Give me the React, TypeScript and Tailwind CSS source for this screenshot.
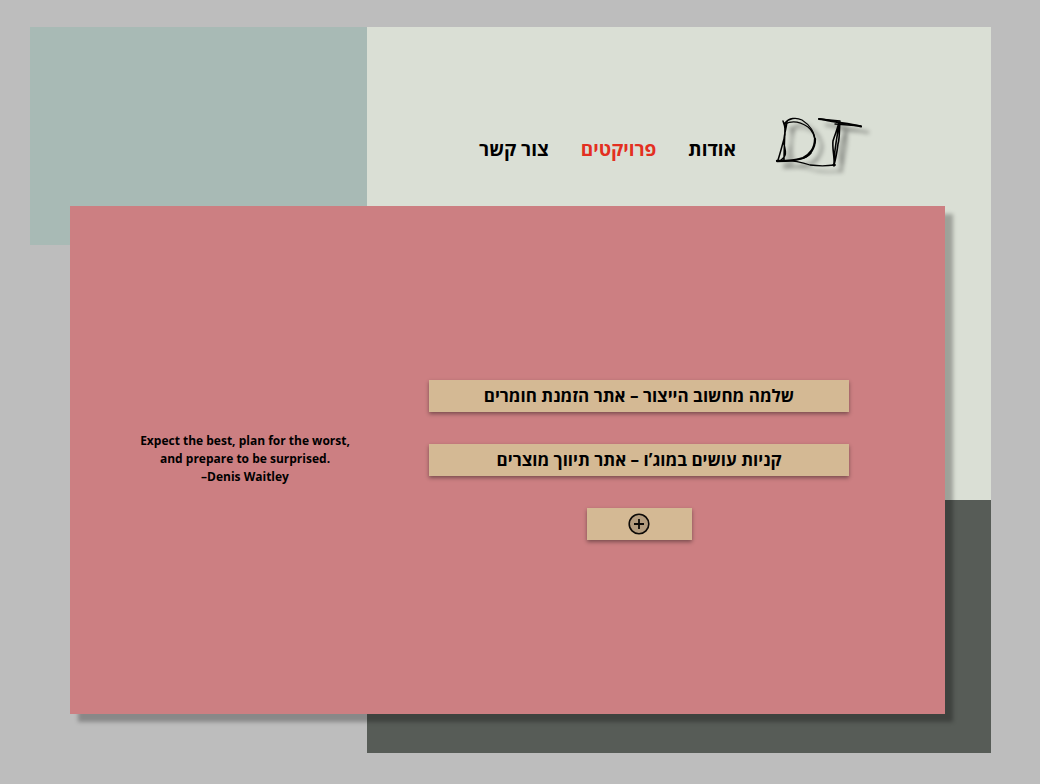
const links = [
  { label: "אודות", href: "#about", active: false },
  { label: "פרויקטים", href: "#projects", active: true },
  { label: "צור קשר", href: "#contact", active: false },
];

const projects = [
  "שלמה מחשוב הייצור – אתר הזמנת חומרים",
  "קניות עושים במוג’ו – אתר תיווך מוצרים",
];

function Logo() {
  return (
    <svg
      viewBox="0 0 120 80"
      className="h-20 w-[120px] drop-shadow-[7px_6px_2px_rgba(0,0,0,0.4)]"
      fill="none"
      stroke="#000"
      strokeLinecap="round"
      strokeLinejoin="round"
      role="img"
      aria-label="DT"
    >
      <path
        d="M23 15C25 20 26 27 24 33C22 40 20 48 18 54M27 16C26 25 23 31 24 38C25 44 28 49 21 54M25 17C25 30 24 42 24 54"
        strokeWidth="1.5"
      />
      <path d="M25 17C29 12 36 11 42 14C50 19 55 27 55 35" strokeWidth="1.3" />
      <path d="M25 18C33 14 42 17 48 21C53 25 55 31 55 37" strokeWidth="1.3" />
      <path d="M55 33C55 42 50 49 43 52C35 55 25 55 17 55" strokeWidth="2.3" />
      <path d="M51 47C46 53 37 54 25 55" strokeWidth="1.4" />
      <path d="M17 55C28 54 41 56 50 59C58 60 67 60 74 59" strokeWidth="1.3" />
      <path d="M59 13C67 14 75 16 82 17C89 18 95 19 101 20.5" strokeWidth="2.2" />
      <path d="M59 13L80 15M75 18L101 20" strokeWidth="1.4" />
      <path
        d="M79 16C78 22 75 28 73 35C72 43 75 52 74 59M80 16C79 24 80 31 78 38C77 46 76 52 74 59M79 19C77 31 74 45 74 58"
        strokeWidth="1.6"
      />
      <circle cx="74" cy="59" r="1.2" fill="#000" />
    </svg>
  );
}

export default function App() {
  return (
    <div className="grid min-h-screen grid-cols-[40px_297fr_578fr_46px] grid-rows-[179px_39px_255fr_214fr_39px] bg-[#bdbdbd] pt-[27px] pr-[49px] pb-[31px] pl-[30px] font-['Open_Sans','Noto_Sans',sans-serif] font-bold text-black">
      <div className="col-start-1 col-end-3 row-start-1 row-end-3 bg-[#a8bab5]" />
      <div className="col-start-3 col-end-5 row-start-1 row-end-4 bg-[#dadfd5]" />
      <div className="col-start-3 col-end-5 row-start-4 row-end-6 bg-[#575c57]" />

      <header
        dir="rtl"
        className="col-start-3 col-end-4 row-start-1 flex items-end gap-6 pr-[65px] pb-5"
      >
        <a href="#home" aria-label="DT" className="shrink-0">
          <Logo />
        </a>
        <nav className="flex gap-8 pb-[23px] text-[19px] leading-7 whitespace-nowrap">
          {links.map((link) => (
            <a
              key={link.href}
              href={link.href}
              aria-current={link.active ? "page" : undefined}
              className={link.active ? "text-[#e32f21]" : "text-black"}
            >
              {link.label}
            </a>
          ))}
        </nav>
      </header>

      <main className="col-start-2 col-end-4 row-start-2 row-end-5 grid grid-cols-[2fr_3fr] items-center bg-[#cc7f82] shadow-[8px_8px_4px_rgba(0,0,0,0.28)]">
        <blockquote className="pb-0.5 text-center text-[12px] leading-[18px]">
          <p>
            Expect the best, plan for the worst,
            <br />
            and prepare to be surprised.
          </p>
          <footer>–Denis Waitley</footer>
        </blockquote>
        <section dir="rtl" className="flex flex-col items-center gap-8 pr-24 pl-[9px]">
          {projects.map((project) => (
            <button
              key={project}
              type="button"
              className="h-8 w-full bg-[#d4b994] text-[17px] leading-7 shadow-[0_2px_4px_rgba(0,0,0,0.4)]"
            >
              {project}
            </button>
          ))}
          <button
            type="button"
            aria-label="הוספה"
            className="flex h-8 w-1/4 items-center justify-center bg-[#d4b994] shadow-[0_2px_4px_rgba(0,0,0,0.4)]"
          >
            <svg viewBox="0 0 24 24" className="size-6" stroke="#0d0a07" aria-hidden="true">
              <circle cx="12" cy="12" r="9.8" fill="#b39c7e" strokeWidth="1.6" />
              <path d="M12 7v10M7 12h10" strokeWidth="1.8" />
            </svg>
          </button>
        </section>
      </main>
    </div>
  );
}
